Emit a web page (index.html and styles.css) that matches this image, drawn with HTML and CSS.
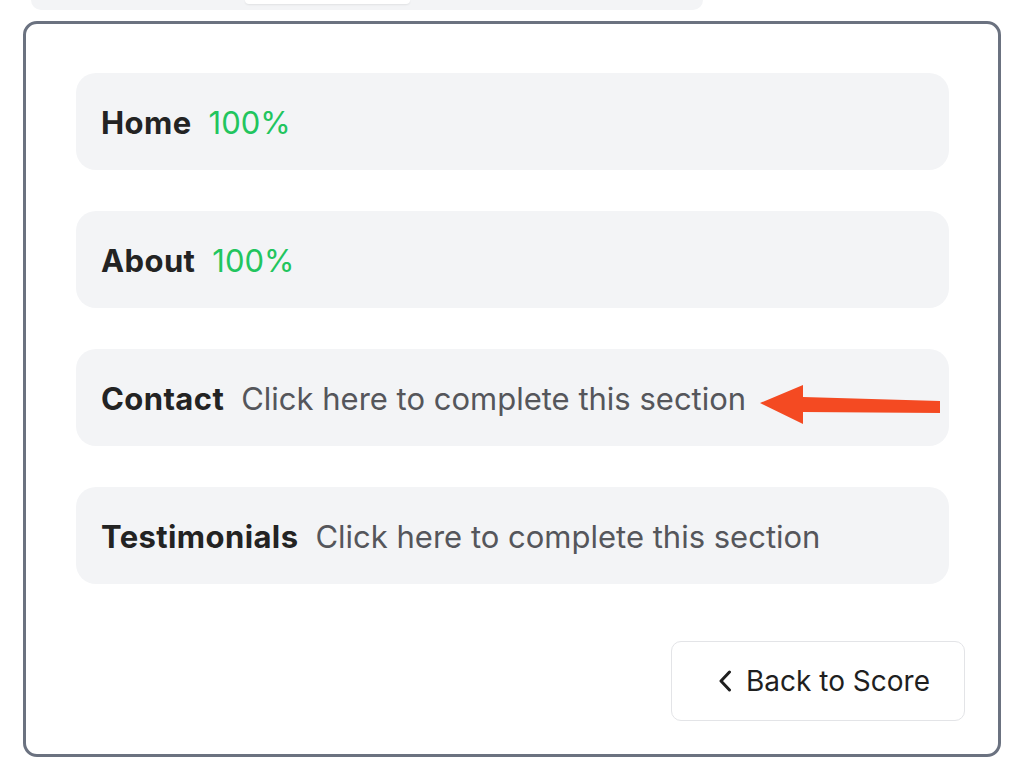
FILE: index.html
```html
<!DOCTYPE html>
<html lang="en">
<head>
<meta charset="utf-8">
<title>Sections</title>
<link rel="stylesheet" href="styles.css">
</head>
<body>
<div class="topbar"><div class="topbar-pill"></div></div>
<main class="card">
  <ul class="sections">
    <li class="section"><span class="label">Home</span><span class="value done">100%</span></li>
    <li class="section"><span class="label">About</span><span class="value done">100%</span></li>
    <li class="section">
      <span class="label">Contact</span><span class="value todo">Click here to complete this section</span>
      <svg class="arrow" width="190" height="44" viewBox="0 0 190 44" aria-hidden="true">
        <polygon points="0,18 43,0 43,12 180,16 180,28 43,27 43,39" fill="#f44a22"/>
      </svg>
    </li>
    <li class="section"><span class="label">Testimonials</span><span class="value todo">Click here to complete this section</span></li>
  </ul>
  <div class="actions">
    <button class="back-btn" type="button">
      <svg class="chev" width="14" height="22" viewBox="0 0 14 22" aria-hidden="true"><path d="M11.5 2 L3 11 L11.5 20" fill="none" stroke="#1f1f1f" stroke-width="3" stroke-linecap="round" stroke-linejoin="round"/></svg>
      <span>Back to Score</span>
    </button>
  </div>
</main>
</body>
</html>
```
FILE: styles.css
```css
* { box-sizing: border-box; }
html, body { margin: 0; padding: 0; background: #ffffff; }
body {
  font-family: Inter, "Noto Sans", "Liberation Sans", sans-serif;
  color: #232323;
  width: 1024px;
  height: 784px;
  overflow: hidden;
}
.topbar {
  margin-left: 31px;
  width: 672px;
  height: 10px;
  background: #f3f4f6;
  border-radius: 0 0 12px 12px;
  padding-left: 214px;
}
.topbar-pill {
  width: 165px;
  height: 4px;
  background: #ffffff;
  border-radius: 0 0 5px 5px;
  box-shadow: 0 1px 2px rgba(0,0,0,0.08);
}
.card {
  margin: 11px 0 0 23px;
  width: 978px;
  height: 736px;
  border: 3px solid #6b7280;
  border-radius: 14px;
  padding: 49px 49px 0 50px;
  display: flex;
  flex-direction: column;
}
.sections {
  list-style: none;
  margin: 0;
  padding: 0;
  display: flex;
  flex-direction: column;
  gap: 41px;
}
.section {
  position: relative;
  height: 97px;
  background: #f3f4f6;
  border-radius: 20px;
  padding: 2px 25px 0;
  display: flex;
  align-items: center;
  gap: 17px;
  font-size: 31px;
}
.label { font-weight: 700; color: #232323; letter-spacing: 0.4px; }
.value.done { color: #22c55e; }
.value.todo { color: #55565b; }
.arrow {
  position: absolute;
  left: 684px;
  top: 36px;
}
.actions {
  display: flex;
  justify-content: flex-end;
  margin-top: 57px;
  margin-right: -16px;
}
.back-btn {
  width: 294px;
  height: 80px;
  background: #ffffff;
  border: 1.5px solid #e3e4e7;
  border-radius: 10px;
  display: flex;
  align-items: center;
  justify-content: center;
  gap: 14px;
  font-family: inherit;
  font-size: 28px;
  color: #1f1f1f;
  padding: 0 0 0 12px;
}
.chev { display: block; }
```
